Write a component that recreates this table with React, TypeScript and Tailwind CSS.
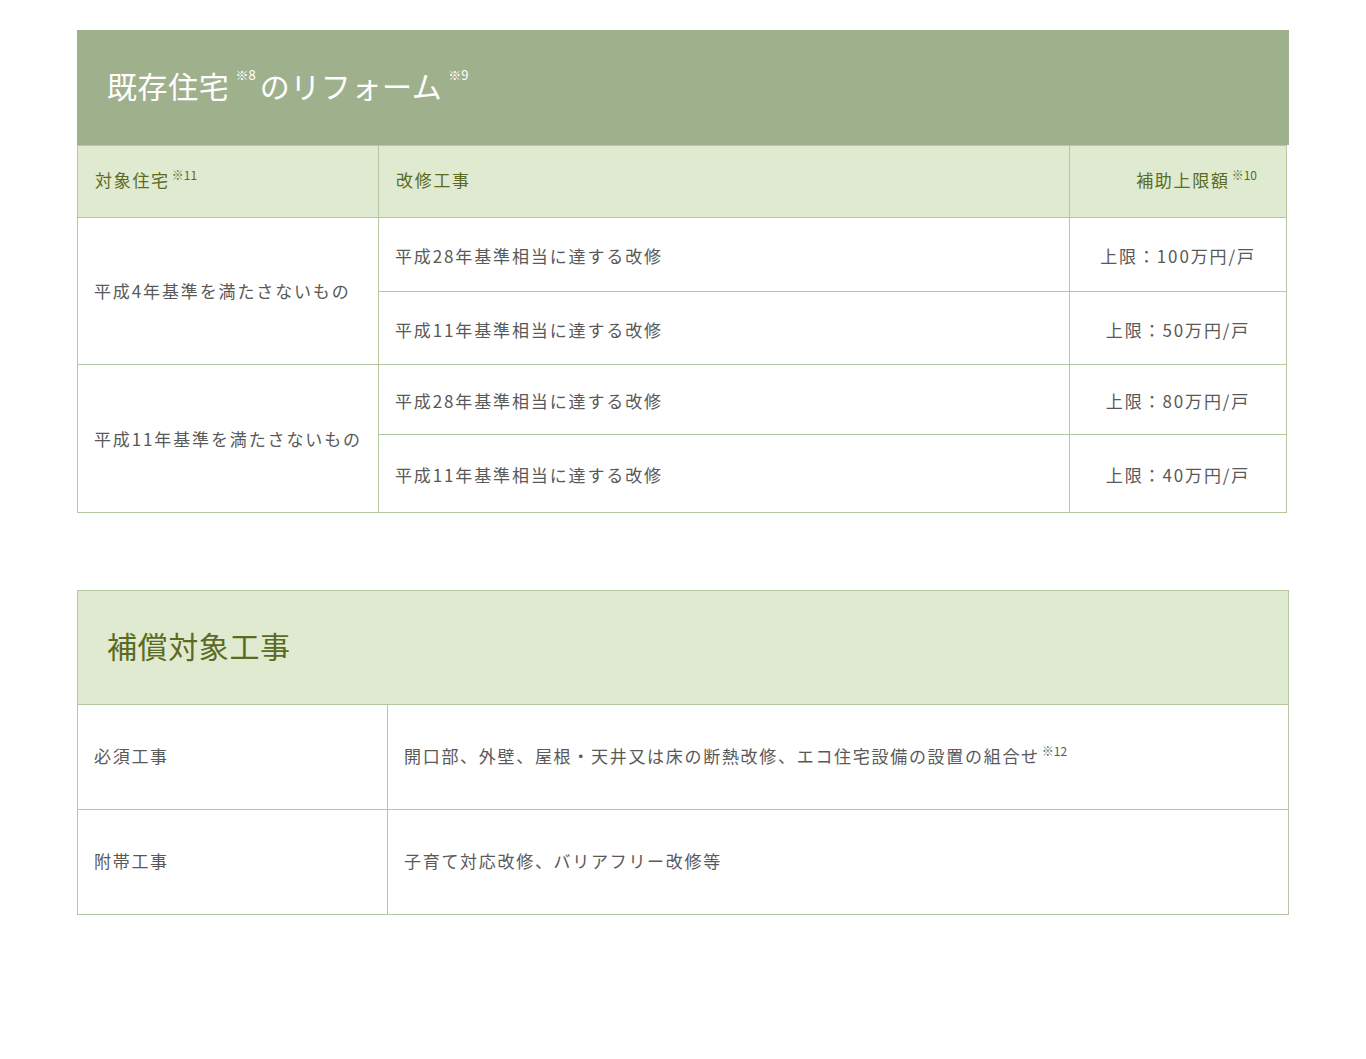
const font = { fontFamily: '"Noto Sans CJK JP", "Noto Sans", sans-serif' };

function Note({ children, big }: { children: React.ReactNode; big?: boolean }) {
  return (
    <span
      className={
        big
          ? "relative -top-[11px] ml-[6px] text-[13px] tracking-normal leading-none"
          : "relative -top-[7px] ml-[2px] text-[12px] tracking-normal leading-none"
      }
    >
      {children}
    </span>
  );
}

const reform = [
  {
    target: "平成4年基準を満たさないもの",
    rows: [
      { work: "平成28年基準相当に達する改修", limit: "上限：100万円/戸", h: "h-[74px]" },
      { work: "平成11年基準相当に達する改修", limit: "上限：50万円/戸", h: "h-[73px]" },
    ],
  },
  {
    target: "平成11年基準を満たさないもの",
    rows: [
      { work: "平成28年基準相当に達する改修", limit: "上限：80万円/戸", h: "h-[70px]" },
      { work: "平成11年基準相当に達する改修", limit: "上限：40万円/戸", h: "h-[78px]" },
    ],
  },
];

export default function App() {
  return (
    <div className="min-h-[1059px] bg-white pt-[30px]" style={font}>
      <div className="ml-[77px] w-[1212px]">
        {/* 既存住宅のリフォーム */}
        <div className="flex h-[115px] items-center bg-[#9fb08c] pb-[4px] pl-[30px] text-[30px] tracking-[0.02em] text-white">
          既存住宅<Note big>※8</Note>
          <span className="ml-[4px] tracking-[0.02em]">のリフォーム</span>
          <Note big>※9</Note>
        </div>
        <table className="w-[1210px] table-fixed border-collapse text-[17px]">
          <colgroup>
            <col className="w-[301px]" />
            <col className="w-[691px]" />
            <col />
          </colgroup>
          <thead>
            <tr className="h-[72px] bg-[#dfead0] text-[#5b6b22]">
              <th className="border border-[#b5c7a0] px-[17px] pb-[3px] text-left font-normal tracking-[0.1em]">
                対象住宅<Note>※11</Note>
              </th>
              <th className="border border-[#b5c7a0] px-[17px] pb-[3px] text-left font-normal tracking-[0.1em]">改修工事</th>
              <th className="border border-[#b5c7a0] pb-[3px] pr-[29px] text-right font-normal tracking-[0.1em]">
                補助上限額<Note>※10</Note>
              </th>
            </tr>
          </thead>
          <tbody className="text-[#595959]">
            {reform.map((g) =>
              g.rows.map((r, i) => (
                <tr key={g.target + i} className={r.h}>
                  {i === 0 && (
                    <td rowSpan={2} className="whitespace-nowrap border border-[#b5c7a0] px-[16px] tracking-[0.11em]">
                      {g.target}
                    </td>
                  )}
                  <td className="border border-[#b5c7a0] px-[16px] pt-[3px] tracking-[0.11em]">{r.work}</td>
                  <td className="border border-[#b5c7a0] pt-[3px] text-center tracking-[0.11em]">{r.limit}</td>
                </tr>
              ))
            )}
          </tbody>
        </table>

        {/* 補償対象工事 */}
        <div className="mt-[77px] flex h-[115px] items-center border border-[#b5c7a0] bg-[#dfead0] pb-[4px] pl-[29px] text-[30px] tracking-[0.02em] text-[#5b6b22]">
          補償対象工事
        </div>
        <table className="w-[1212px] table-fixed border-collapse text-[17px] text-[#595959]">
          <colgroup>
            <col className="w-[310px]" />
            <col />
          </colgroup>
          <tbody>
            <tr className="h-[104px]">
              <td className="border border-t-0 border-[#b5c7a0] px-[16px] pb-[2px] tracking-[0.1em]">必須工事</td>
              <td className="border border-t-0 border-[#b5c7a0] px-[16px] pb-[2px] tracking-[0.1em]">
                開口部、外壁、屋根・天井又は床の断熱改修、エコ住宅設備の設置の組合せ<Note>※12</Note>
              </td>
            </tr>
            <tr className="h-[105px]">
              <td className="border border-[#b5c7a0] px-[16px] pb-[2px] tracking-[0.1em]">附帯工事</td>
              <td className="border border-[#b5c7a0] px-[16px] pb-[2px] tracking-[0.1em]">子育て対応改修、バリアフリー改修等</td>
            </tr>
          </tbody>
        </table>
      </div>
    </div>
  );
}
